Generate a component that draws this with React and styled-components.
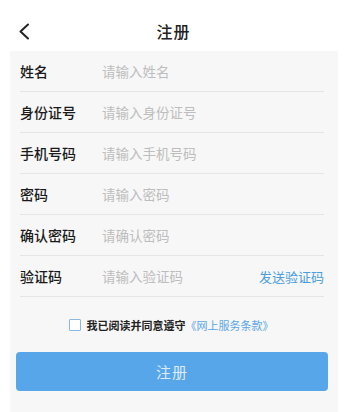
import React from 'react'
import styled, { createGlobalStyle } from 'styled-components'

const GlobalStyle = createGlobalStyle`
  html, body {
    margin: 0;
    padding: 0;
    background: #ffffff;
    font-family: "Noto Sans CJK SC", "Noto Sans", sans-serif;
  }
`

const FIELDS = [
  { label: '姓名', placeholder: '请输入姓名' },
  { label: '身份证号', placeholder: '请输入身份证号' },
  { label: '手机号码', placeholder: '请输入手机号码' },
  { label: '密码', placeholder: '请输入密码', type: 'password' },
  { label: '确认密码', placeholder: '请确认密码', type: 'password' },
  { label: '验证码', placeholder: '请输入验证码', action: '发送验证码' }
]

function Register() {
  const [agreed, setAgreed] = React.useState(false)

  return (
    <Page>
      <GlobalStyle />
      <Header>
        <BackButton type="button" aria-label="返回">
          <svg width="12" height="17" viewBox="0 0 12 17">
            <path
              d="M10 1.5 L2.5 8.5 L10 15.5"
              fill="none"
              stroke="#222"
              strokeWidth="2"
              strokeLinecap="round"
              strokeLinejoin="round"
            />
          </svg>
        </BackButton>
        <Title>注册</Title>
      </Header>
      <Panel>
        <Form onSubmit={e => e.preventDefault()}>
          {FIELDS.map(field => (
            <Row key={field.label}>
              <Label>{field.label}</Label>
              <Input
                type={field.type || 'text'}
                placeholder={field.placeholder}
                autoComplete="off"
              />
              {field.action && <SendCode type="button">{field.action}</SendCode>}
            </Row>
          ))}
          <Agreement>
            <CheckBox
              type="checkbox"
              checked={agreed}
              onChange={() => setAgreed(v => !v)}
            />
            <AgreeText>我已阅读并同意遵守</AgreeText>
            <TermsLink>《网上服务条款》</TermsLink>
          </Agreement>
          <SubmitButton type="submit">注册</SubmitButton>
        </Form>
      </Panel>
    </Page>
  )
}

const Page = styled.div`
  display: flex;
  flex-direction: column;
  min-height: 412px;
`

const Header = styled.header`
  position: relative;
  height: 51px;
  display: flex;
  align-items: center;
  justify-content: center;
`

const BackButton = styled.button`
  position: absolute;
  left: 18px;
  top: 23px;
  padding: 0;
  border: none;
  background: none;
  display: flex;
`

const Title = styled.h1`
  margin: 0;
  padding-top: 11px;
  font-size: 16px;
  font-weight: 500;
  color: #222;
  letter-spacing: 1px;
`

const Panel = styled.main`
  flex: 1;
  margin: 0 9px 0 10px;
  background: #f7f7f7;
`

const Form = styled.form`
  display: flex;
  flex-direction: column;
`

const Row = styled.label`
  display: flex;
  align-items: center;
  height: 41px;
  margin: 0 14px 0 10px;
  border-bottom: 1px solid #e6e6e6;
  box-sizing: border-box;
`

const Label = styled.span`
  width: 82px;
  flex-shrink: 0;
  font-size: 14px;
  font-weight: 500;
  color: #1a1a1a;
`

const Input = styled.input`
  flex: 1;
  min-width: 0;
  border: none;
  outline: none;
  background: transparent;
  padding: 0;
  font-family: inherit;
  font-size: 13.5px;
  color: #333;

  &::placeholder {
    color: #bdbdbd;
  }
`

const SendCode = styled.button`
  border: none;
  background: none;
  padding: 0;
  font-family: inherit;
  font-size: 13px;
  color: #4a9de0;
`

const Agreement = styled.div`
  display: flex;
  align-items: center;
  justify-content: center;
  height: 55px;
  margin-left: -6px;
`

const CheckBox = styled.input`
  appearance: none;
  width: 12px;
  height: 12px;
  margin: 0 6px 0 0;
  border: 1px solid #8cb9e2;
  border-radius: 1px;
  background: #fff;
`

const AgreeText = styled.span`
  font-size: 11px;
  font-weight: 700;
  color: #222;
`

const TermsLink = styled.span`
  font-size: 11px;
  color: #5aa6e6;
`

const SubmitButton = styled.button`
  height: 39px;
  margin: 0 10px 0 6px;
  border: none;
  border-radius: 4px;
  background: #58a6ea;
  color: #dcecfb;
  font-family: inherit;
  font-size: 15px;
  letter-spacing: 1px;
`

export default function App() {
  return <Register />
}
